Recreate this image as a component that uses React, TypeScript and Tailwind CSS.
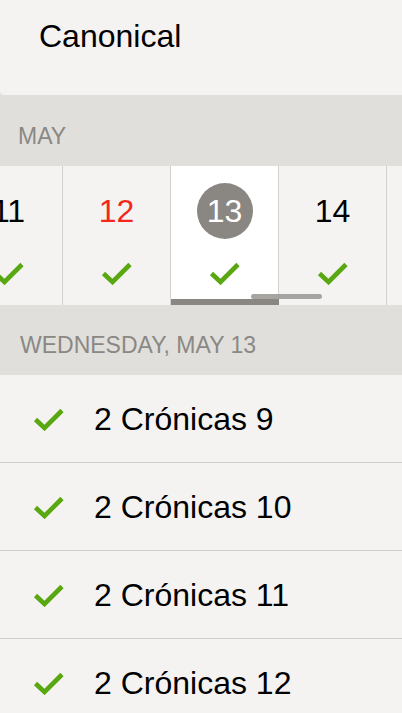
import React from "react";

function Check({ className = "" }: { className?: string }) {
  return (
    <svg width="31" height="24" viewBox="0 0 31 24" className={className}>
      <polyline
        points="2.5,12.5 11.5,21 29,3.5"
        fill="none"
        stroke="#59a812"
        strokeWidth="4.6"
        strokeLinecap="butt"
        strokeLinejoin="miter"
      />
    </svg>
  );
}

const days = [
  { n: "11", color: "text-black", sel: false },
  { n: "12", color: "text-[#f2281c]", sel: false },
  { n: "13", color: "text-white", sel: true },
  { n: "14", color: "text-black", sel: false },
];

const rows = ["2 Crónicas 9", "2 Crónicas 10", "2 Crónicas 11", "2 Crónicas 12"];

export default function App() {
  return (
    <div
      className="w-[402px] h-[713px] overflow-hidden bg-[#e0dfdc]"
      style={{ fontFamily: '"Liberation Sans", Arial, sans-serif' }}
    >
      <div className="h-[95px] bg-[#f4f3f2] rounded-bl-[4px] pl-[39px] pt-[20px]">
        <div className="text-[32px] leading-none text-black">Canonical</div>
      </div>

      <div className="h-[71px] bg-[#e0dfdc] pl-[18px] pt-[30px]">
        <div className="text-[23px] leading-none text-[#8b8884]">MAY</div>
      </div>

      <div className="relative h-[139px] bg-[#f4f3f2] overflow-hidden">
        <div className="flex ml-[-45px] h-full">
          {days.map((d) => (
            <div
              key={d.n}
              className={`relative shrink-0 w-[108px] h-full border-r border-[#d3d1ce] flex flex-col items-center pt-[17px] ${
                d.sel ? "bg-white" : ""
              }`}
            >
              <div
                className={`w-[56px] h-[56px] rounded-full flex items-center justify-center ${
                  d.sel ? "bg-[#8a8682]" : ""
                }`}
              >
                <span className={`text-[32px] leading-none ${d.color}`}>{d.n}</span>
              </div>
              <Check className="mt-[22px]" />
              {d.sel && (
                <div className="absolute left-0 right-[-1px] bottom-0 h-[6px] bg-[#8a8682]" />
              )}
            </div>
          ))}
          <div className="shrink-0 w-[108px] h-full" />
        </div>
        <div className="absolute left-[251px] top-[128px] w-[71px] h-[5px] rounded-full bg-[#9d9b98]/90" />
      </div>

      <div className="h-[70px] bg-[#e0dfdc] pl-[20px] pt-[29px]">
        <div className="text-[23px] leading-none text-[#8b8884]">WEDNESDAY, MAY 13</div>
      </div>

      <div className="bg-[#f4f3f2]">
        {rows.map((r) => (
          <div
            key={r}
            className="h-[88px] border-b border-[#d0cecb] flex items-center"
          >
            <div className="w-[94px] pl-[33px] flex items-center">
              <Check />
            </div>
            <span className="text-[32px] leading-none text-black">{r}</span>
          </div>
        ))}
      </div>
    </div>
  );
}
